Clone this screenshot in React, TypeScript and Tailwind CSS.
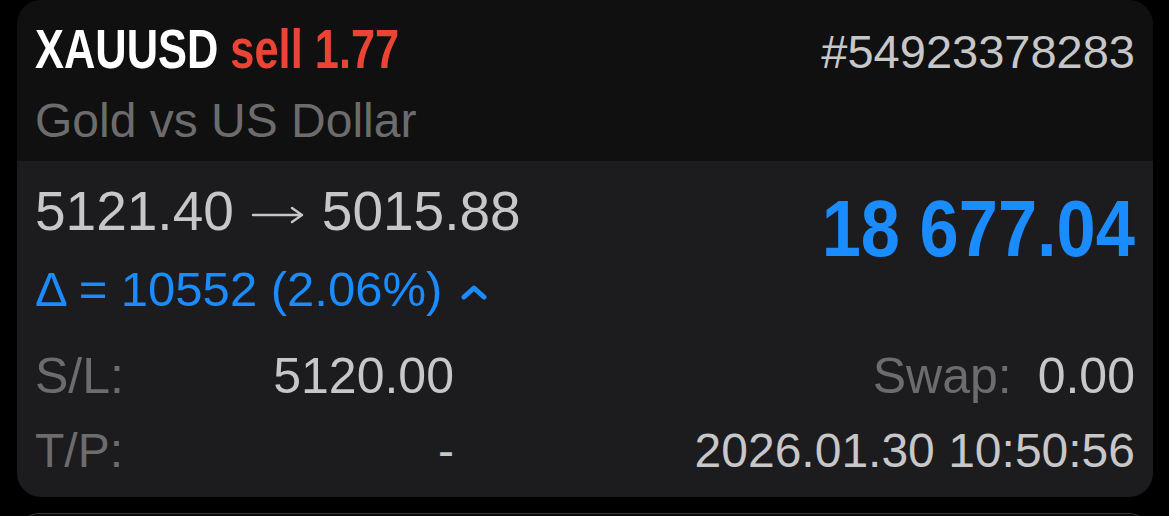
const sans = "font-['Liberation_Sans',Arial,sans-serif]";

function Row({
  label,
  value,
  right,
  size,
}: {
  label: string;
  value: string;
  right: React.ReactNode;
  size: string;
}) {
  return (
    <div className={`flex items-baseline justify-between ${size}`}>
      <div className="flex w-[419px] justify-between">
        <span className="text-[#6c6c6e]">{label}</span>
        <span className="text-[#c7c7c9]">{value}</span>
      </div>
      <div>{right}</div>
    </div>
  );
}

export default function App() {
  return (
    <div className={`min-h-screen bg-black pl-[17px] overflow-hidden ${sans}`}>
      <div className="w-[1136px]">
        {/* Header */}
        <div className="h-[161px] rounded-t-[24px] bg-[#101010] px-[18px] pt-[21px]">
          <div className="flex items-baseline justify-between">
            <div className="w-[380px]">
              <div className="inline-block origin-left scale-x-[0.775] whitespace-nowrap text-[56px] leading-[55px] font-bold">
                <span className="text-white">XAUUSD</span>{" "}
                <span className="text-[#eb4435]">sell 1.77</span>
              </div>
            </div>
            <span className="text-[47px] leading-[47px] text-[#c7c7c9]">#54923378283</span>
          </div>
          <div className="mt-[21px] text-[48px] leading-[48px] text-[#6c6c6e]">
            Gold vs US Dollar
          </div>
        </div>

        {/* Body */}
        <div className="h-[336px] rounded-b-[24px] bg-[#1c1c1e] px-[18px] pt-[23px]">
          <div className="flex justify-between">
            <div>
              <div className="flex items-center text-[55px] leading-[55px] text-[#c7c7c9]">
                <span>5121.40</span>
                <svg className="mx-[17px] mt-[6px] h-[20px] w-[54px]" viewBox="0 0 54 20" fill="none">
                  <path
                    d="M2 10 H51 M41 3 L51 10 L41 17"
                    stroke="#c7c7c9"
                    strokeWidth="2.4"
                    strokeLinecap="round"
                    strokeLinejoin="round"
                  />
                </svg>
                <span>5015.88</span>
              </div>
              <div className="mt-[26px] flex items-center text-[49px] leading-[49px] text-[#1a8cff]">
                <span>Δ = 10552 (2.06%)</span>
                <svg className="ml-[19px] mt-[4px] h-[16px] w-[26px]" viewBox="0 0 26 16" fill="none">
                  <path
                    d="M3 13 L13 4 L23 13"
                    stroke="#1a8cff"
                    strokeWidth="5"
                    strokeLinecap="round"
                    strokeLinejoin="round"
                  />
                </svg>
              </div>
            </div>
            <div className="mt-[5px] flex justify-end">
              <div className="origin-right scale-x-[0.88] whitespace-nowrap text-[80px] leading-[80px] font-bold text-[#1a8cff]">
                18 677.04
              </div>
            </div>
          </div>

          <div className="mt-[37px] flex flex-col gap-[26px]">
            <Row
              size="text-[50px] leading-[50px]"
              label="S/L:"
              value="5120.00"
              right={
                <span>
                  <span className="text-[#6c6c6e]">Swap:</span>
                  <span className="ml-[26px] text-[#c7c7c9]">0.00</span>
                </span>
              }
            />
            <Row
              size="text-[48px] leading-[48px]"
              label="T/P:"
              value="-"
              right={<span className="text-[#c7c7c9]">2026.01.30 10:50:56</span>}
            />
          </div>
        </div>

        {/* Next card edge */}
        <div className="mt-[16px] ml-[2px] h-[20px] w-[1130px] rounded-t-[24px] border-t border-[#3a3a3c] bg-[#0a0a0a]" />
      </div>
    </div>
  );
}
